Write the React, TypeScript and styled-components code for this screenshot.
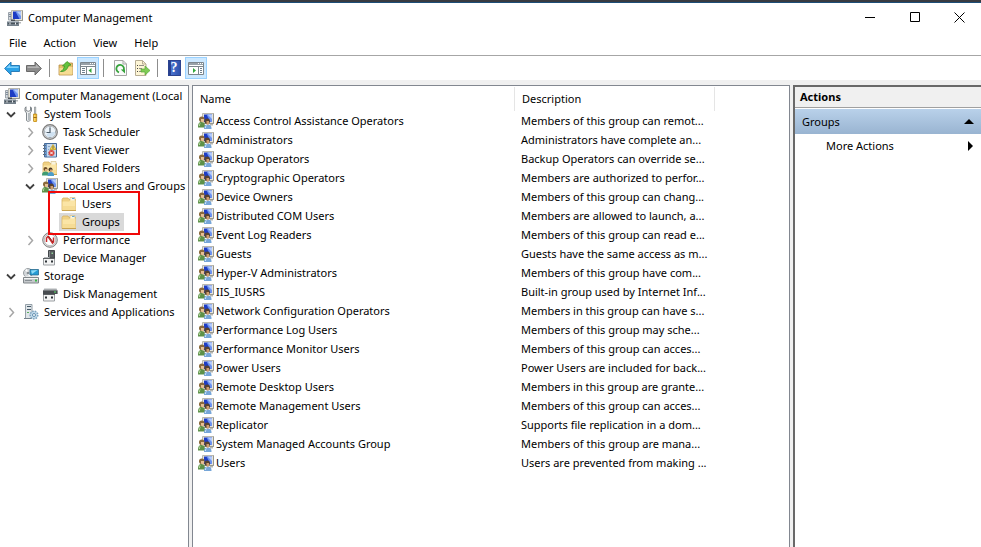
import React from "react";
import styled, { createGlobalStyle, css } from "styled-components";

const GlobalStyle = createGlobalStyle`
  *, *::before, *::after { box-sizing: border-box; }
  body {
    margin: 0;
    background: #f0f0f0;
    color: #000;
    font: 11px/18px "Noto Sans", "Segoe UI", sans-serif;
  }
  button {
    font: inherit;
    color: inherit;
    background: none;
    border: 0;
    padding: 0;
    margin: 0;
    text-align: left;
    white-space: nowrap;
  }
  ul { list-style: none; margin: 0; padding: 0; }
  h1, h2 { margin: 0; font: inherit; }
`;

/* ---------- icons ---------- */

const Glyph = styled.svg`
  display: block;
  flex: none;
  width: 16px;
  height: 16px;
`;

const Monitor = () => (
  <>
    <path d="M4.500.5h11v10h-11z" fill="#e6e4da" stroke="#b9b8b0" />
    <path d="M6 1.500h8V9H6z" fill="#1d3cc4" />
    <path d="M8.500 1.500H14V9h-1.500z" fill="#6d92ee" />
    <path d="M9.500 1.500H14V6z" fill="#b4cbfa" />
    <path d="M15.500.5v10h-10" fill="none" stroke="#97978f" />
  </>
);

const ComputerIcon = () => (
  <Glyph viewBox="0 0 16 16" aria-hidden="true">
    <path d="M1.500 2.500H4V10H1.500z" fill="#d7dbe0" stroke="#9aa2aa" />
    <path d="M2 4.500h2M2 6.500h2" stroke="#7f8c99" />
    <Monitor />
    <path d="M4 9.500h4v2H4z" fill="#4a5057" />
    <path d="M0 11h12v5H0z" fill="#74808a" />
    <path d="M0 11h12v1H0z" fill="#b4bcc3" />
    <path d="M1 13.500h10" stroke="#48525b" />
    <path d="M3 12.500v2M8.500 12.500v2" stroke="#eef0f2" />
    <path d="M12 12h2v1.500h-2z" fill="#b4b7ba" />
  </Glyph>
);

const UsersIcon = () => (
  <Glyph viewBox="0 0 16 16" aria-hidden="true">
    <Monitor />
    <path d="M12 11h3v1.500h-3z" fill="#b7b7b1" />
    <path d="M0 14.500C0 10.500 1 9 3.500 9S7 10.500 7 14.500z" fill="#5d9148" />
    <path d="M1.500 13c0-1.500.3-2.500 1-3" stroke="#b5d8a0" fill="none" />
    <circle cx="3.800" cy="6.200" r="2.800" fill="#8a6a3c" />
    <path d="M3 6h3v2.500L4.500 9.500 3 8.500z" fill="#e6c094" />
    <path d="M6 16c0-3.500 1.200-4.500 3.800-4.500s3.700 1 3.700 4.500z" fill="#76a6d8" />
    <path d="M7.500 15c0-1.500.3-2 1-2.500" stroke="#d5e8f9" fill="none" />
    <circle cx="9.200" cy="8.300" r="2.700" fill="#57432f" />
    <path d="M8.500 8H11v3l-1.200 1-1.300-1z" fill="#cf9d6e" />
  </Glyph>
);

const FolderBase = () => (
  <>
    <path d="M1 3.500 2 2h5l1 1.500h6.500v11H1z" fill="#efd083" stroke="#d6b163" strokeWidth=".8" />
    <path d="M9 1.500h5V6H9z" fill="#faf4df" stroke="#d2b878" strokeWidth=".6" />
    <path d="M1.500 5.500H8l1-1h5.500V14h-13z" fill="#fbe5a6" />
    <path d="M2 10h12v4H2z" fill="#f4d68a" opacity=".6" />
    <path d="M1 14.500h14" stroke="#c9a351" />
  </>
);

const FolderIcon = () => (
  <Glyph viewBox="0 0 16 16" aria-hidden="true">
    <FolderBase />
    <path d="M11 2.500h2.500" stroke="#61a8dc" />
  </Glyph>
);

const SharedFolderIcon = () => (
  <Glyph viewBox="0 0 16 16" aria-hidden="true">
    <FolderBase />
    <circle cx="3.500" cy="9" r="2" fill="#715026" />
    <path d="M3 9h2v2H3z" fill="#e1b183" />
    <path d="M0 15.500C0 12.500 1 11.500 3.500 11.500S7 13 7 15.500z" fill="#3f9b72" />
    <circle cx="8.500" cy="9.500" r="2" fill="#463729" />
    <path d="M8 9.500h2v2H8z" fill="#d5a273" />
    <path d="M5.500 16c0-3 1-4 3.500-4s3 1 3 4z" fill="#4d9dc8" />
  </Glyph>
);

const ToolsIcon = () => (
  <Glyph viewBox="0 0 16 16" aria-hidden="true">
    <path d="M3 .8 2 2v3l1.500 2v7.500c0 1 3.500 1 3.500 0V7l1.500-2V2l-1-1.200v3.700L5.300 5.300 3 4.500z" fill="#eef0f1" stroke="#747b80" strokeWidth=".9" />
    <path d="M5.500 7v7" stroke="#b1b9be" />
    <path d="M11.500 1h1.200v6.500h-1.200z" fill="#d9dde0" stroke="#85898c" strokeWidth=".7" />
    <path d="M10.500 8h3.200v7l-.7 1h-1.800l-.7-1z" fill="#f0b429" stroke="#b08018" strokeWidth=".7" />
    <path d="M11.800 9v6" stroke="#ffe27f" />
    <path d="M10.500 11.500h3.200" stroke="#a06c10" />
  </Glyph>
);

const ClockIcon = () => (
  <Glyph viewBox="0 0 16 16" aria-hidden="true">
    <circle cx="8" cy="8" r="7.300" fill="#d2d2d2" stroke="#7c7c7c" strokeWidth="1.200" />
    <circle cx="8" cy="8" r="5.800" fill="#edf4fa" stroke="#b2b9bf" strokeWidth=".8" />
    <path d="M8 8h5A5 5 0 0 1 4 11z" fill="#cfe1f1" />
    <path d="M8 3.500v5H4.500" fill="none" stroke="#4c5b69" strokeWidth="1.200" />
    <path d="M8 2.500v.8M8 13v.8M2.500 8h.8M13 8h.8" stroke="#6e7a84" />
  </Glyph>
);

const EventIcon = () => (
  <Glyph viewBox="0 0 16 16" aria-hidden="true">
    <path d="M2.500 1.500h12v13.500h-12z" fill="#6c98cb" stroke="#466a98" />
    <path d="M5 2h9v12.500H5z" fill="#c4d8ee" />
    <path d="M6 4.500h2M6 7.500h1M6 10.500h1M6 12.500h2" stroke="#8aa5c6" />
    <path d="M1 3.500h3M1 6.500h3M1 9.500h3M1 12.500h3" stroke="#5c6d82" />
    <path d="m11 2.500 3 5H8z" fill="#ffdc50" stroke="#c29d20" strokeWidth=".7" />
    <path d="M11 4.300v1.500M11 6.300v.7" stroke="#444" />
    <circle cx="9.500" cy="11" r="3" fill="#d9453e" />
    <path d="m8.200 9.700 2.600 2.600m0-2.600-2.600 2.600" stroke="#fff" />
  </Glyph>
);

const PerformanceIcon = () => (
  <Glyph viewBox="0 0 16 16" aria-hidden="true">
    <circle cx="8" cy="8" r="7.300" fill="#dcdcdc" stroke="#808080" />
    <circle cx="8" cy="8" r="5.700" fill="#fff" stroke="#aaa" strokeWidth=".7" />
    <path d="M4.500 10V6L6 4.500l4.500 6.500 1-1V5.500" fill="none" stroke="#c92a2a" strokeWidth="1.500" />
    <path d="m6.500 4 4.500 6" stroke="#8d2020" />
  </Glyph>
);

const Connector = () => (
  <>
    <path d="M1.500 8.500h11V15h-11z" fill="#f3f4f4" stroke="#9b9fa2" />
    <path d="M1 8.500h12" stroke="#5d6164" />
    <path d="M3 10.500h2v2H3zM9 10.500h2v2H9z" fill="#2e3337" />
  </>
);

const DeviceIcon = () => (
  <Glyph viewBox="0 0 16 16" aria-hidden="true">
    <path d="M6.500.5h6V8h-6z" fill="#565a5d" stroke="#44484b" />
    <path d="M7.500 1v7" stroke="#858a8d" />
    <path d="M9.500 2.500h1.500V4H9.500z" fill="#8ed096" />
    <path d="M2 7h5v1.500H2z" fill="#b9bcbe" />
    <Connector />
  </Glyph>
);

const StorageIcon = () => (
  <Glyph viewBox="0 0 16 16" aria-hidden="true">
    <circle cx="5" cy="5" r="4.500" fill="#d3d7da" stroke="#989ea2" />
    <path d="m5 5-3-3 2-1zM5 5l3 3-2 1z" fill="#fff" />
    <circle cx="5" cy="5" r="1.300" fill="#878f95" />
    <path d="M7 1.500h8.500V7H7z" fill="#259bd4" stroke="#286b8e" strokeWidth=".8" />
    <path d="m8 2.500 6.500-.5L9 6z" fill="#8edbf7" />
    <path d="M1 9.500 3 8h11l1.500 1.500z" fill="#e8eaeb" />
    <path d="M.5 9.500h15v5.500H.5z" fill="#c5c9cc" stroke="#80868a" />
    <path d="M1 10.500h14" stroke="#f4f5f5" />
    <path d="M2 12.500h7" stroke="#888f94" />
    <path d="M12 11.500h2v2h-2z" fill="#39b747" />
  </Glyph>
);

const DiskIcon = () => (
  <Glyph viewBox="0 0 16 16" aria-hidden="true">
    <path d="M3 2 1 4.500V8h14.500V4.500L14 2z" fill="#a9adb0" />
    <path d="M1 4.500h14.500V8H1z" fill="#484c50" />
    <path d="M3 2.500h11" stroke="#d8dadb" />
    <path d="M12 5.500h2v1h-2z" fill="#5be36b" />
    <Connector />
  </Glyph>
);

const ServicesIcon = () => (
  <Glyph viewBox="0 0 16 16" aria-hidden="true">
    <path d="M2.500.5h6.500v14H2.500z" fill="#dfe5e9" stroke="#95a0a8" />
    <path d="M4 2.500h4M4 5.500h4" stroke="#465a69" />
    <path d="M4 8.500h2" stroke="#5bb05f" />
    <path d="M1 14.500h8" stroke="#76838d" />
    <circle cx="11" cy="11" r="3.800" fill="#c3dbec" stroke="#7fa5c0" strokeWidth="1.500" strokeDasharray="1.600 1" />
    <circle cx="11" cy="11" r="1.500" fill="#fff" stroke="#6390af" />
  </Glyph>
);

const ArrowIcon = ({ forward = false }: { forward?: boolean }) => (
  <Glyph viewBox="0 0 16 16" aria-hidden="true">
    <g transform={forward ? "matrix(-1 0 0 1 16 0)" : undefined}>
      <path
        d="M.6 8.500 7 2v3.500h8.500v6H7V15z"
        fill={forward ? "#8c8c8c" : "#2aa2e8"}
        stroke={forward ? "#6a6a6a" : "#2a7db8"}
        strokeLinejoin="round"
      />
      <path d="M2.200 8 6 4.200v2.300h8.500V8z" fill={forward ? "#b5b5b5" : "#7fd0fa"} />
    </g>
  </Glyph>
);

const UpFolderIcon = () => (
  <Glyph viewBox="0 0 16 16" aria-hidden="true">
    <path d="M1 5h6l1-2h6.500v12H1z" fill="#e5c06c" stroke="#b99149" strokeWidth=".8" />
    <path d="M1.500 8H7l1-1h6.500v7.500h-13z" fill="#f6dc94" />
    <path d="M2.500 11.500c2.500-1 3.500-3 4-5.500L4.500 6 9 1.500l4 3.500-2.500.5C9.500 9 7 12 2.500 11.500z" fill="#63c23e" stroke="#3a9425" strokeWidth=".8" />
  </Glyph>
);

const PaneIcon = ({ flip = false }: { flip?: boolean }) => (
  <Glyph viewBox="0 0 16 16" aria-hidden="true">
    <path d="M.5 2.500h15v12H.5z" fill="#fff" stroke="#7d868d" />
    <path d="M1 3h14v2H1z" fill="#98a1a8" />
    <path d="M10 3.500h1M12 3.500h1M14 3.500h1" stroke="#fff" />
    <path d="M1 6.500h14" stroke="#7d868d" />
    {flip ? (
      <>
        <path d="M10.500 7v7" stroke="#7d868d" />
        <path d="M12 8.500h2M12 10.500h2M12 12.500h2" stroke="#6f7f8c" />
        <path d="M5 8v5l3-2.500z" fill="#32a83b" />
      </>
    ) : (
      <>
        <path d="M6.500 7v7" stroke="#7d868d" />
        <path d="M2 8.500h3M2 10.500h3M2 12.500h3" stroke="#6f7f8c" />
        <path d="M11.500 8v5l-3-2.500z" fill="#32a83b" />
      </>
    )}
  </Glyph>
);

const RefreshIcon = () => (
  <Glyph viewBox="0 0 16 16" aria-hidden="true">
    <path d="M2.500.5H11L14.500 4v11.500h-12z" fill="#fafafa" stroke="#a6a6a6" />
    <path d="M11 .5V4h3.500" fill="none" stroke="#a6a6a6" />
    <path d="M7 12.300A3.800 3.800 0 1 1 11.500 10.500" fill="none" stroke="#37a33c" strokeWidth="1.800" />
    <path d="M8.800 9.500H13v4z" fill="#37a33c" />
  </Glyph>
);

const ExportIcon = () => (
  <Glyph viewBox="0 0 16 16" aria-hidden="true">
    <path d="M1.500.5h7L12 4v11.500H1.500z" fill="#fdf5d5" stroke="#b7ad94" />
    <path d="M8.500.5V4H12" fill="none" stroke="#b7ad94" />
    <path d="M3 5.500h1M3 8.500h1M3 11.500h1" stroke="#444" />
    <path d="M5 5.500h5M5 8.500h3M5 11.500h3" stroke="#929087" />
    <path d="M7 9h4V6l5 4.500-5 4.500v-3H7z" fill="#7fcb55" stroke="#57a838" strokeWidth=".7" />
  </Glyph>
);

const HelpBox = styled.span`
  display: block;
  width: 13px;
  height: 16px;
  background: linear-gradient(90deg, #283f8f 2px, #4a74d0 2px, #2f51ac);
  border: 1px solid #2b4390;
  color: #fff;
  font: bold 14px/14px "Liberation Serif", serif;
  text-align: center;
`;

const ChevronIcon = ({ open }: { open: boolean }) => (
  <svg width="12" height="12" viewBox="0 0 12 12" aria-hidden="true">
    <path
      d={open ? "m2 4.500 4 4 4-4" : "m4.500 2 4 4.500-4 4.500"}
      fill="none"
      stroke={open ? "#404040" : "#a6a6a6"}
      strokeWidth={open ? 1.800 : 1.500}
    />
  </svg>
);

/* ---------- window frame ---------- */

const Window = styled.div`
  display: flex;
  flex-direction: column;
  min-height: 100vh;
  border-top: 2px solid #383b40;
`;

const TitleBar = styled.header`
  display: flex;
  align-items: center;
  height: 30px;
  padding-left: 7px;
  background: #fff;
  border-top: 1px solid #1c4e78;
`;

const Title = styled.h1`
  flex: 1;
  padding-left: 5px;
`;

const CaptionButton = styled.button`
  display: grid;
  place-items: center;
  width: 45px;
  height: 29px;
  &:last-child { width: 43px; }
`;

const MenuBar = styled.nav`
  display: flex;
  height: 24px;
  padding: 0 2px 1px;
  background: #fff;
  border-bottom: 1px solid #a6a6a6;
`;

const MenuButton = styled.button`
  padding: 0 7px;
  & + & { margin-left: 3px; }
`;

const Toolbar = styled.div`
  display: flex;
  align-items: center;
  height: 24px;
  padding-left: 1px;
  background: #fff;
`;

const ToolButton = styled.button<{ $pressed?: boolean }>`
  display: grid;
  place-items: center;
  place-content: center;
  width: 22px;
  height: 22px;
  ${(p) =>
    p.$pressed &&
    css`
      background: #cce8ff;
      border: 1px solid #99d1ff;
    `}
`;

const Divider = styled.span`
  width: 1px;
  height: 18px;
  margin: 0 5px 0 4px;
  background: #8d8d8d;
`;

const Panes = styled.main`
  display: grid;
  flex: 1;
  grid-template-columns: 189px minmax(0, 1fr) 188px;
  column-gap: 3px;
  margin-top: 5px;
`;

const Pane = styled.section`
  min-width: 0;
  overflow: hidden;
  background: #fff;
  border: 1px solid #828790;
  border-bottom: 0;
`;

/* ---------- tree ---------- */

const TreePane = styled(Pane)`
  border-left: 0;
  padding-top: 1px;
`;

const TreeRow = styled.div<{ $depth: number }>`
  display: flex;
  align-items: center;
  height: 18px;
  padding-left: ${(p) => (p.$depth === 0 ? 2 : p.$depth * 19 - 14)}px;
  gap: 4px;
`;

const Toggle = styled.button`
  display: block;
  flex: none;
  width: 12px;
  height: 12px;
  svg { display: block; }
`;

const ToggleSpace = styled.span`
  flex: none;
  width: 12px;
`;

const NodeButton = styled.button<{ $selected?: boolean }>`
  display: flex;
  align-items: center;
  gap: 5px;
  height: 18px;
  padding: 0 4px 0 2px;
  background: ${(p) => (p.$selected ? "#d9d9d9" : "transparent")};
`;

const MarkedGroup = styled.ul`
  position: relative;
  &::after {
    content: "";
    position: absolute;
    left: 48px;
    top: -4px;
    width: 92px;
    height: 44px;
    border: 2px solid #f00808;
    pointer-events: none;
  }
`;

type Node = {
  label: string;
  icon: React.ReactNode;
  open?: boolean;
  selected?: boolean;
  marked?: boolean;
  children?: Node[];
};

const tree: Node = {
  label: "Computer Management (Local",
  icon: <ComputerIcon />,
  children: [
    {
      label: "System Tools",
      icon: <ToolsIcon />,
      open: true,
      children: [
        { label: "Task Scheduler", icon: <ClockIcon />, open: false },
        { label: "Event Viewer", icon: <EventIcon />, open: false },
        { label: "Shared Folders", icon: <SharedFolderIcon />, open: false },
        {
          label: "Local Users and Groups",
          icon: <UsersIcon />,
          open: true,
          marked: true,
          children: [
            { label: "Users", icon: <FolderIcon /> },
            { label: "Groups", icon: <FolderIcon />, selected: true },
          ],
        },
        { label: "Performance", icon: <PerformanceIcon />, open: false },
        { label: "Device Manager", icon: <DeviceIcon /> },
      ],
    },
    {
      label: "Storage",
      icon: <StorageIcon />,
      open: true,
      children: [{ label: "Disk Management", icon: <DiskIcon /> }],
    },
    { label: "Services and Applications", icon: <ServicesIcon />, open: false },
  ],
};

const TreeNode = ({ node, depth }: { node: Node; depth: number }) => {
  const Group = node.marked ? MarkedGroup : "ul";
  return (
    <li>
      <TreeRow $depth={depth}>
        {depth > 0 &&
          (node.open === undefined ? (
            <ToggleSpace />
          ) : (
            <Toggle aria-label={node.label} aria-expanded={node.open}>
              <ChevronIcon open={node.open} />
            </Toggle>
          ))}
        <NodeButton $selected={node.selected}>
          {node.icon}
          {node.label}
        </NodeButton>
      </TreeRow>
      {node.children && (
        <Group>
          {node.children.map((child) => (
            <TreeNode key={child.label} node={child} depth={depth + 1} />
          ))}
        </Group>
      )}
    </li>
  );
};

/* ---------- list ---------- */

const List = styled.table`
  table-layout: fixed;
  width: 522px;
  border-collapse: collapse;
`;

const HeadCell = styled.th<{ $width: number }>`
  width: ${(p) => p.$width}px;
  height: 25px;
  padding: 0 0 0 7px;
  background: linear-gradient(#e5e5e5, #e5e5e5) right top 1px / 1px 24px no-repeat;
  font-weight: normal;
  text-align: left;
`;

const Cell = styled.td`
  height: 19px;
  padding: 0 0 0 6px;
  white-space: nowrap;
`;

const NameCell = styled.div`
  display: flex;
  align-items: center;
  gap: 2px;
  margin-left: -1px;
`;

const groups: [string, string][] = [
  ["Access Control Assistance Operators", "Members of this group can remot..."],
  ["Administrators", "Administrators have complete an..."],
  ["Backup Operators", "Backup Operators can override se..."],
  ["Cryptographic Operators", "Members are authorized to perfor..."],
  ["Device Owners", "Members of this group can chang..."],
  ["Distributed COM Users", "Members are allowed to launch, a..."],
  ["Event Log Readers", "Members of this group can read e..."],
  ["Guests", "Guests have the same access as m..."],
  ["Hyper-V Administrators", "Members of this group have com..."],
  ["IIS_IUSRS", "Built-in group used by Internet Inf..."],
  ["Network Configuration Operators", "Members in this group can have s..."],
  ["Performance Log Users", "Members of this group may sche..."],
  ["Performance Monitor Users", "Members of this group can acces..."],
  ["Power Users", "Power Users are included for back..."],
  ["Remote Desktop Users", "Members in this group are grante..."],
  ["Remote Management Users", "Members of this group can acces..."],
  ["Replicator", "Supports file replication in a dom..."],
  ["System Managed Accounts Group", "Members of this group are mana..."],
  ["Users", "Users are prevented from making ..."],
];

/* ---------- actions ---------- */

const ActionsPane = styled(Pane)`
  border: solid #696969;
  border-width: 2px 0 0 2px;
`;

const ActionsTitle = styled.h2`
  height: 21px;
  padding-left: 5px;
  background: #f0f0f0;
  border-bottom: 1px solid #a0a0a0;
  font-weight: bold;
  line-height: 20px;
`;

const ActionRow = styled.button<{ $heading?: boolean }>`
  display: flex;
  align-items: center;
  justify-content: space-between;
  width: 100%;
  height: ${(p) => (p.$heading ? 26 : 24)}px;
  padding: 0 7px 0 ${(p) => (p.$heading ? 7 : 31)}px;
  ${(p) =>
    p.$heading &&
    css`
      border-top: 1px solid #fff;
      background: linear-gradient(#b9d1ea, #99b4d1) padding-box;
    `}
`;

export default function App() {
  return (
    <>
      <GlobalStyle />
      <Window>
        <TitleBar>
          <ComputerIcon />
          <Title>Computer Management</Title>
          <CaptionButton aria-label="Minimize">
            <svg width="11" height="11" aria-hidden="true">
              <path d="M0 5.500h10" stroke="#000" />
            </svg>
          </CaptionButton>
          <CaptionButton aria-label="Maximize">
            <svg width="11" height="11" aria-hidden="true">
              <path d="M.5.5h9v9h-9z" stroke="#000" fill="none" />
            </svg>
          </CaptionButton>
          <CaptionButton aria-label="Close">
            <svg width="11" height="11" aria-hidden="true">
              <path d="m.5.5 10 10m0-10-10 10" stroke="#000" />
            </svg>
          </CaptionButton>
        </TitleBar>
        <MenuBar>
          <MenuButton>File</MenuButton>
          <MenuButton>Action</MenuButton>
          <MenuButton>View</MenuButton>
          <MenuButton>Help</MenuButton>
        </MenuBar>
        <Toolbar>
          <ToolButton aria-label="Back"><ArrowIcon /></ToolButton>
          <ToolButton aria-label="Forward"><ArrowIcon forward /></ToolButton>
          <Divider />
          <ToolButton aria-label="Up one level"><UpFolderIcon /></ToolButton>
          <ToolButton aria-label="Show console tree" $pressed><PaneIcon /></ToolButton>
          <Divider />
          <ToolButton aria-label="Refresh"><RefreshIcon /></ToolButton>
          <ToolButton aria-label="Export list"><ExportIcon /></ToolButton>
          <Divider />
          <ToolButton aria-label="Help"><HelpBox>?</HelpBox></ToolButton>
          <ToolButton aria-label="Show action pane" $pressed><PaneIcon flip /></ToolButton>
        </Toolbar>
        <Panes>
          <TreePane>
            <ul>
              <TreeNode node={tree} depth={0} />
            </ul>
          </TreePane>
          <Pane>
            <List>
              <thead>
                <tr>
                  <HeadCell $width={322}>Name</HeadCell>
                  <HeadCell $width={200}>Description</HeadCell>
                </tr>
              </thead>
              <tbody>
                {groups.map(([name, description]) => (
                  <tr key={name}>
                    <Cell>
                      <NameCell>
                        <UsersIcon />
                        {name}
                      </NameCell>
                    </Cell>
                    <Cell>{description}</Cell>
                  </tr>
                ))}
              </tbody>
            </List>
          </Pane>
          <ActionsPane>
            <ActionsTitle>Actions</ActionsTitle>
            <ActionRow $heading>
              Groups
              <svg width="10" height="6" aria-hidden="true">
                <path d="m5 0 5 5H0z" />
              </svg>
            </ActionRow>
            <ActionRow>
              More Actions
              <svg width="6" height="10" aria-hidden="true">
                <path d="m0 0 5 5-5 5z" />
              </svg>
            </ActionRow>
          </ActionsPane>
        </Panes>
      </Window>
    </>
  );
}
